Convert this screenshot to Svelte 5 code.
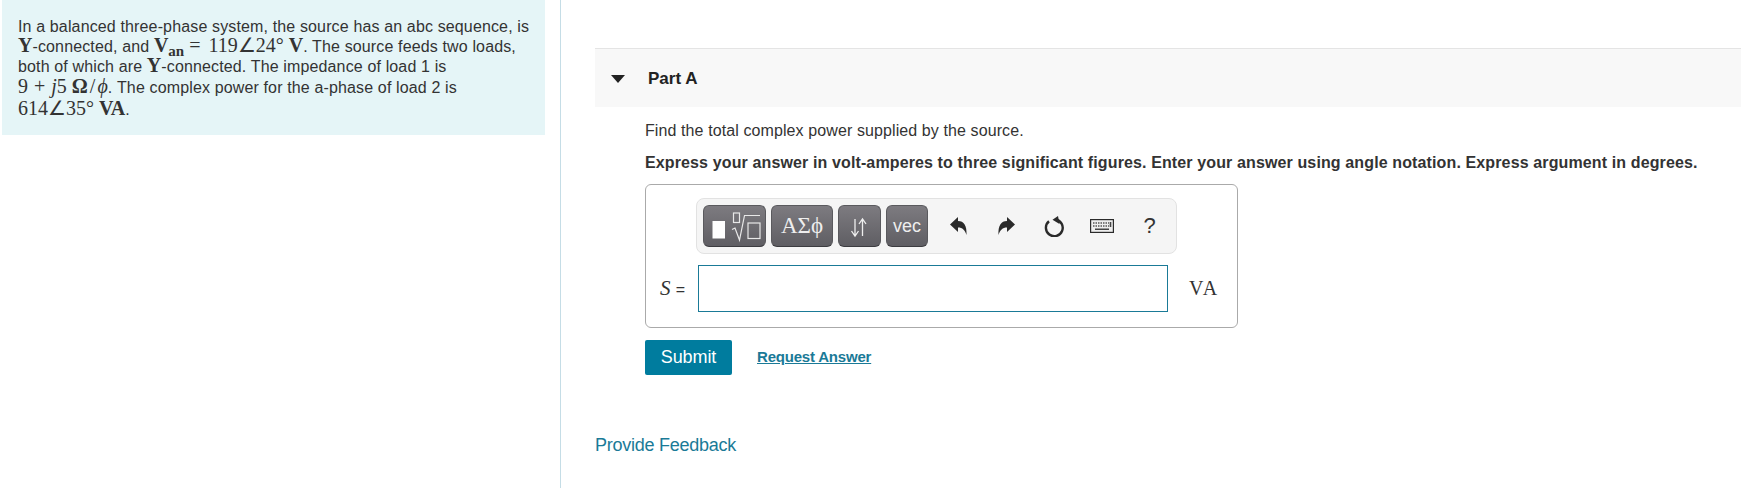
<script lang="ts">
	let answer = $state('');
</script>

<div class="page">
	<aside class="left">
		<div class="intro">
			<div>In a balanced three-phase system, the source has an abc sequence, is</div>
			<div><span class="m b">Y</span>-connected, and <span class="m b">V<sub>an</sub></span><span class="m"><span class="eq">=</span>119∠24°<b class="sp">V</b></span>. The source feeds two loads,</div>
			<div>both of which are <span class="m b">Y</span>-connected. The impedance of load 1 is</div>
			<div class="l4"><span class="m">9<span class="plus">+</span><i>j</i>5<b class="sp">Ω</b><span class="slash">/</span><i>ϕ</i></span>. The complex power for the a-phase of load 2 is</div>
			<div class="l5"><span class="m">614∠35°<b class="sp">VA</b></span>.</div>
		</div>
	</aside>

	<main class="right">
		<div class="part-head">
			<svg class="caret" width="14" height="8" viewBox="0 0 14 8"><path d="M0 0h14L7 8z" fill="#222" /></svg>
			<h2>Part A</h2>
		</div>

		<section class="part-body">
			<p class="question">Find the total complex power supplied by the source.</p>
			<p class="instr">Express your answer in volt-amperes to three significant figures. Enter your answer using angle notation. Express argument in degrees.</p>

			<div class="answer-box">
				<div class="toolbar">
					<button class="tool t1" type="button" aria-label="Templates">
						<svg width="61" height="40" viewBox="1 1 61 40">
							<rect x="9.500" y="16" width="12.500" height="17.500" fill="#fff" />
							<path d="M29 24.500l3-1.500 4.500 12L41.500 10.500H57" fill="none" stroke="#e8e8e8" stroke-width="1.200" />
							<rect x="30.500" y="8" width="6" height="9.500" fill="none" stroke="#e8e8e8" stroke-width="1.200" />
							<rect x="45" y="18" width="12" height="15.500" fill="none" stroke="#e8e8e8" stroke-width="1.200" />
						</svg>
					</button>
					<button class="tool t2 greek" type="button">ΑΣϕ</button>
					<button class="tool t3" type="button" aria-label="Arrows">
						<svg width="41" height="40" viewBox="1 1 41 40">
							<path d="M17 14v17M13.500 26l3.500 5 3.500-5M24.500 31V14M21 19l3.500-5 3.500 5" fill="none" stroke="#eee" stroke-width="1.300" />
						</svg>
					</button>
					<button class="tool t4" type="button">vec</button>

					<div class="icons">
						<span class="cell">
							<svg width="17" height="18" viewBox="0 0 17 18"><path d="M0 7.500L8 0v4c6 0 9 4.500 8.500 14-1.500-5-4-7.500-8.500-7.500V15z" fill="#2a2a2a" /></svg>
						</span>
						<span class="cell">
							<svg width="17" height="18" viewBox="0 0 17 18"><path d="M17 7.500L9 0v4C3 4 0 8.500 .5 18c1.500-5 4-7.500 8.500-7.500V15z" fill="#2a2a2a" /></svg>
						</span>
						<span class="cell">
							<svg width="20" height="21" viewBox="0 0 20 21">
								<path d="M5 5.300a8.400 8.400 0 1 0 6.500-1.800" fill="none" stroke="#2a2a2a" stroke-width="2.400" />
								<path d="M8.500 3.800L14 0l1.500 8z" fill="#2a2a2a" />
							</svg>
						</span>
						<span class="cell">
							<svg width="24" height="14" viewBox="0 0 24 14">
								<rect x="0.600" y="0.600" width="22.800" height="12.800" fill="#eee" stroke="#2a2a2a" stroke-width="1.200" />
								<path d="M3 4h16M3 7h16" stroke="#555" stroke-width="1.500" stroke-dasharray="1.500 1" />
								<path d="M20.500 3v5M5 10.300h14" stroke="#444" stroke-width="1.600" />
							</svg>
						</span>
						<span class="cell help">?</span>
					</div>
				</div>

				<div class="answer-row">
					<label for="ans"><i>S</i> <span>=</span></label>
					<input id="ans" bind:value={answer} />
					<span class="unit">VA</span>
				</div>
			</div>

			<div class="actions">
				<button class="submit" type="button">Submit</button>
				<a href="#request" class="request">Request Answer</a>
			</div>
		</section>

		<a href="#feedback" class="feedback">Provide Feedback</a>
	</main>
</div>

<style>
	:global(body) {
		margin: 0;
		background: #fff;
	}

	.page {
		display: flex;
		height: 488px;
		overflow: hidden;
		font-family: 'Liberation Sans', Arial, sans-serif;
		color: #333;
	}

	.left {
		width: 561px;
		flex: none;
		border-right: 1px solid #c5dde6;
		padding-left: 2px;
		box-sizing: border-box;
	}

	.intro {
		width: 543px;
		height: 135px;
		box-sizing: border-box;
		background: #e5f5f7;
		padding: 17px 16px;
		font-size: 16px;
		line-height: 20px;
		letter-spacing: 0.14px;
		white-space: nowrap;
	}

	.l4 {
		margin-top: 1px;
	}

	.l5 {
		margin-top: 2px;
	}

	.m {
		font-family: 'Liberation Serif', serif;
		font-size: 20px;
		line-height: 0;
		letter-spacing: 0;
		color: #333;
	}

	.b,
	.m b {
		font-weight: bold;
	}

	.eq {
		margin: 0 8px 0 5px;
	}

	.plus {
		margin: 0 6px;
	}

	.slash {
		margin: 0 2px;
	}

	.sp {
		margin-left: 5px;
	}

	sub {
		font-size: 15px;
		line-height: 0;
		vertical-align: -4px;
	}

	.right {
		flex: 1;
		min-width: 0;
		padding: 48px 0 0 34px;
	}

	.part-head {
		display: flex;
		align-items: center;
		height: 59px;
		box-sizing: border-box;
		background: #f8f8f8;
		border-top: 1px solid #e4e4e4;
		padding: 1px 0 0 16px;
	}

	.part-head h2 {
		margin: 0 0 0 23px;
		font-size: 17px;
		font-weight: bold;
		color: #222;
	}

	.part-body {
		padding-left: 50px;
	}

	.question {
		margin: 15px 0 0;
		font-size: 16px;
		line-height: 18px;
		letter-spacing: 0.1px;
	}

	.instr {
		margin: 14px 0 0;
		font-size: 16px;
		line-height: 18px;
		font-weight: bold;
		letter-spacing: 0.125px;
		white-space: nowrap;
	}

	.answer-box {
		width: 593px;
		height: 144px;
		box-sizing: border-box;
		margin-top: 12px;
		border: 1px solid #aaa;
		border-radius: 6px;
		padding: 13px 0 0 14px;
	}

	.toolbar {
		display: flex;
		align-items: center;
		width: 481px;
		height: 56px;
		box-sizing: border-box;
		margin-left: 36px;
		padding: 0 0 0 6px;
		gap: 5px;
		background: #f5f5f5;
		border: 1px solid #e2e2e2;
		border-radius: 8px;
	}

	.tool {
		display: flex;
		flex: none;
		align-items: center;
		justify-content: center;
		height: 42px;
		padding: 0;
		border: 1px solid #5a5a5e;
		border-bottom-color: #3c3c40;
		border-radius: 6px;
		background: linear-gradient(#7d7b80, #5f5e63);
		color: #eee;
		font-family: 'Liberation Sans', Arial, sans-serif;
	}

	.t1 { width: 63px; }
	.t2 { width: 62px; }
	.t3 { width: 43px; }
	.t4 { width: 42px; font-size: 18px; }

	.greek {
		font-family: 'Liberation Serif', serif;
		font-size: 23px;
	}

	.icons {
		display: flex;
		align-items: center;
		margin-left: 1px;
	}

	.cell {
		display: flex;
		align-items: center;
		justify-content: center;
		width: 48px;
	}

	.help {
		width: 47px;
		font-size: 22px;
		color: #333;
	}

	.answer-row {
		display: flex;
		align-items: center;
		margin-top: 11px;
	}

	.answer-row label {
		width: 38px;
		flex: none;
		font-family: 'Liberation Serif', serif;
		font-size: 21px;
	}

	.answer-row label span {
		font-family: 'Liberation Sans', sans-serif;
		font-size: 16px;
	}

	input {
		width: 470px;
		height: 47px;
		box-sizing: border-box;
		border: 1px solid #1a7a97;
		outline: none;
		padding: 0 8px;
	}

	.unit {
		margin-left: 21px;
		font-family: 'Liberation Serif', serif;
		font-size: 20px;
		letter-spacing: 2px;
	}

	.actions {
		display: flex;
		align-items: center;
		margin-top: 12px;
		gap: 25px;
	}

	.submit {
		width: 87px;
		height: 35px;
		border: 0;
		border-radius: 2px;
		background: #007c9e;
		color: #fff;
		font-family: 'Liberation Sans', Arial, sans-serif;
		font-size: 18px;
		letter-spacing: -0.1px;
	}

	.request {
		margin-bottom: 2px;
		font-size: 15px;
		font-weight: bold;
		letter-spacing: -0.2px;
		color: #1a7a97;
	}

	.feedback {
		display: block;
		margin-top: 60px;
		font-size: 18px;
		letter-spacing: -0.25px;
		color: #1a7a97;
		text-decoration: none;
	}
</style>
